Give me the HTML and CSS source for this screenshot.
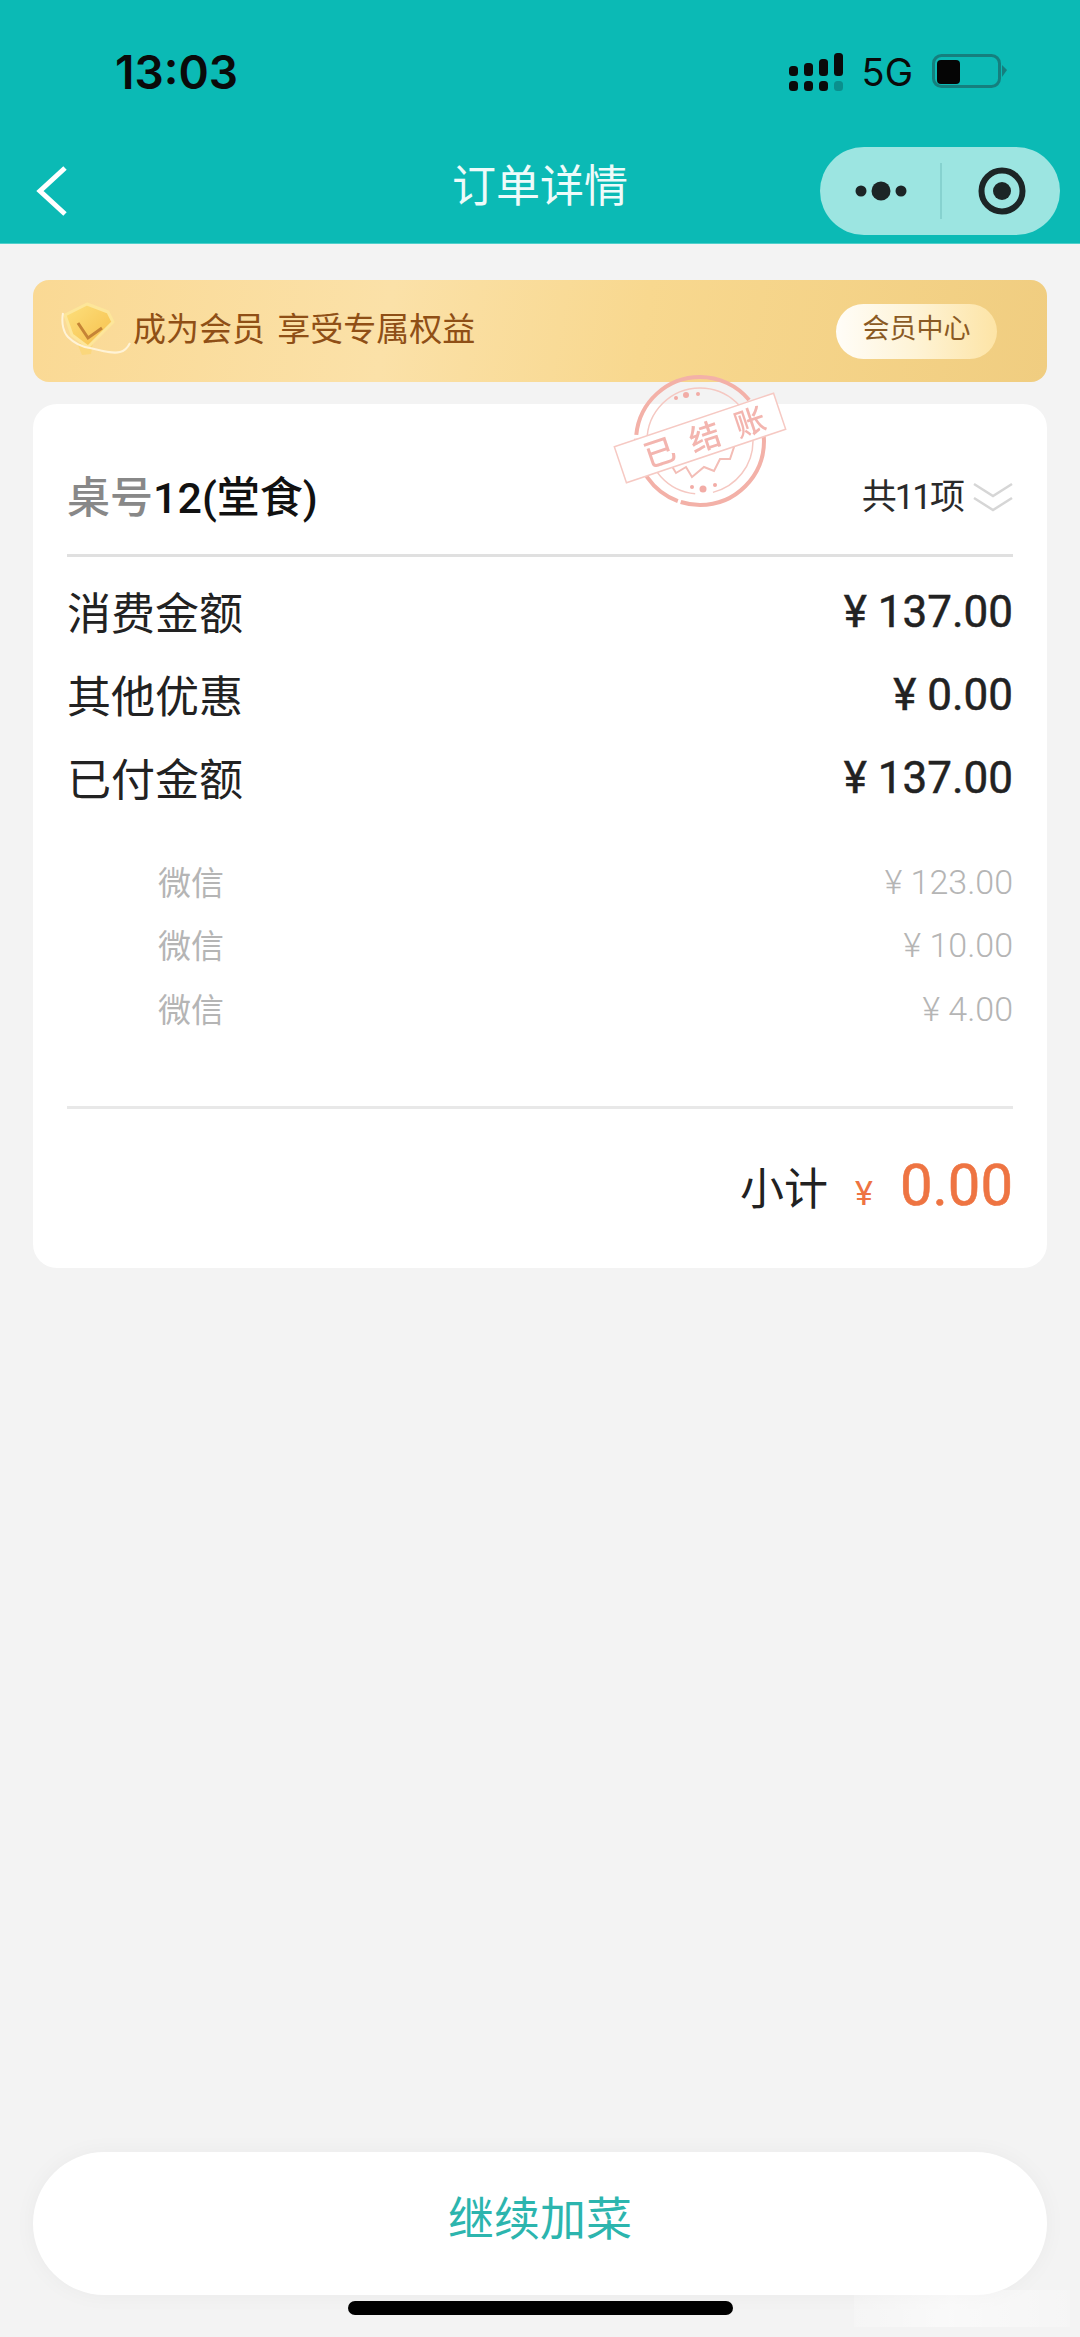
FILE: index.html
```html
<!DOCTYPE html>
<html>
<head>
    <meta charset="utf-8">
    <title>订单详情</title>
    <link rel="stylesheet" href="styles.css">
</head>
<body>
    <div class="page">
        <div class="header">
            <div class="status-bar">
                <span class="time">13:03</span>
                <div class="status-icons">
                    <svg class="signal" width="54" height="38" viewBox="0 0 54 38">
                        <rect x="0" y="13" width="9" height="10" rx="3.5" fill="#0a0a0a"/>
                        <rect x="15" y="10" width="9" height="13" rx="3.5" fill="#0a0a0a"/>
                        <rect x="30" y="6" width="9" height="17" rx="3.5" fill="#0a0a0a"/>
                        <rect x="45" y="0" width="9" height="23" rx="3.5" fill="#0a0a0a"/>
                        <rect x="0" y="28" width="9" height="10" rx="3.5" fill="#0a0a0a"/>
                        <rect x="15" y="28" width="9" height="10" rx="3.5" fill="#0a0a0a"/>
                        <rect x="30" y="28" width="9" height="10" rx="3.5" fill="#0a0a0a"/>
                        <rect x="45" y="28" width="9" height="10" rx="3.5" fill="#0a8f8d"/>
                    </svg>
                    <span class="network">5G</span>
                    <svg class="battery" width="75" height="34" viewBox="0 0 75 34">
                        <rect x="1.5" y="1.5" width="66" height="31" rx="8" fill="none" stroke="#157f7e" stroke-width="3"/>
                        <rect x="5" y="6" width="23" height="24" rx="4" fill="#050505"/>
                        <path d="M70 11 L75 16 L70 23 Z" fill="#157f7e"/>
                    </svg>
                </div>
            </div>
            <div class="nav-bar">
                <svg class="back" width="32" height="50" viewBox="0 0 32 50">
                    <path d="M29 2 L4 25 L29 48" fill="none" stroke="#fff" stroke-width="5"/>
                </svg>
                <span class="nav-title">订单详情</span>
                <div class="capsule">
                    <svg width="60" height="20" viewBox="0 0 60 20">
                        <circle cx="6" cy="10" r="5.5" fill="#1c2526"/>
                        <circle cx="26" cy="10" r="9.5" fill="#1c2526"/>
                        <circle cx="46" cy="10" r="5.5" fill="#1c2526"/>
                    </svg>
                    <span class="capsule-line"></span>
                    <svg width="48" height="48" viewBox="0 0 48 48">
                        <circle cx="24" cy="24" r="20.5" fill="none" stroke="#1c2526" stroke-width="6"/>
                        <circle cx="24" cy="24" r="9" fill="#1c2526"/>
                    </svg>
                </div>
            </div>
        </div>

        <div class="content">
            <div class="member-banner">
                <div class="member-left">
                    <svg width="76" height="58" viewBox="0 0 76 58">
                        <defs>
                            <linearGradient id="shield" x1="0" y1="0" x2="1" y2="1">
                                <stop offset="0" stop-color="#fde07e"/>
                                <stop offset="1" stop-color="#f6bf4a"/>
                            </linearGradient>
                        </defs>
                        <path d="M16 41 L32 41 L30 52 L21 53 Z" fill="#fbd77c"/>
                        <path d="M4 13 L26 2 L47 10 L52 20 L27 45 L11 33 Z" fill="url(#shield)" stroke="#fde69a" stroke-width="3" stroke-linejoin="round"/>
                        <path d="M17 21 L27 36 L41 26" fill="none" stroke="#c58436" stroke-width="3"/>
                        <path d="M2 11 C0 22 3 31 7 35 C14 42 22 45 29 46 C42 49 52 52 59 50 C64 49 67 45 69 41" fill="none" stroke="#fff3d6" stroke-width="2"/>
                    </svg>
                    <span class="member-text">成为会员 享受专属权益</span>
                </div>
                <span class="member-btn">会员中心</span>
            </div>

            <div class="card">
                <div class="card-head">
                    <div class="table-name"><span class="table-label">桌号</span>12(堂食)</div>
                    <div class="item-count">
                        <span class="item-text">共11项</span>
                        <svg width="40" height="30" viewBox="0 0 40 30">
                            <path d="M1 2 L20 14 L39 2 M1 16 L20 28 L39 16" fill="none" stroke="#d6d6d6" stroke-width="2.5"/>
                        </svg>
                    </div>
                </div>

                <div class="rows">
                    <div class="row"><span>消费金额</span><span class="amount">¥ 137.00</span></div>
                    <div class="row"><span>其他优惠</span><span class="amount">¥ 0.00</span></div>
                    <div class="row"><span>已付金额</span><span class="amount">¥ 137.00</span></div>
                </div>

                <div class="pay-rows">
                    <div class="pay-row"><span>微信</span><span class="pay-amount">¥ 123.00</span></div>
                    <div class="pay-row"><span>微信</span><span class="pay-amount">¥ 10.00</span></div>
                    <div class="pay-row"><span>微信</span><span class="pay-amount">¥ 4.00</span></div>
                </div>

                <div class="subtotal">
                    <span class="subtotal-label">小计</span>
                    <span class="subtotal-yen">¥</span>
                    <span class="subtotal-value">0.00</span>
                </div>
            </div>

            <!-- stamp sits over the banner and the card -->
            <svg class="stamp" width="190" height="150" viewBox="0 0 190 150">
                <circle cx="92" cy="74" r="64" fill="none" stroke="#f3b1a8" stroke-width="4" stroke-dasharray="120 3 80 4 150 2"/>
                <circle cx="92" cy="74" r="53" fill="none" stroke="#f5c8c2" stroke-width="1.5" stroke-dasharray="70 18 240 10"/>
                <g fill="#f2aca6">
                    <circle cx="68" cy="31" r="2"/><circle cx="78" cy="28" r="3"/><circle cx="90" cy="27" r="2"/>
                    <circle cx="84" cy="120" r="2"/><circle cx="95" cy="122" r="3.5"/><circle cx="107" cy="118" r="2"/>
                </g>
                <path d="M62 96 L128 74 L122 92 L112 92 L106 104 L96 100 L84 110 L78 100 L68 106 Z" fill="none" stroke="#f3bdb6" stroke-width="2"/>
                <g transform="rotate(-18.6 92 71)">
                    <rect x="8" y="52" width="168" height="38" fill="#fff" stroke="#f6c9c3" stroke-width="1.5"/>
                    <text class="stamp-text" x="105" y="83" text-anchor="middle">已结账</text>
                </g>
            </svg>
        </div>

        <div class="footer">
            <div class="add-btn">继续加菜</div>
            <div class="home-bar"></div>
            <div class="watermark"></div>
        </div>
    </div>
</body>
</html>
```

FILE: styles.css
```css
* { box-sizing: border-box; }
body {
    margin: 0;
    font-family: "Roboto", "Noto Sans CJK SC", sans-serif;
    color: #222;
}
.page {
    width: 1080px;
    height: 2337px;
    background-color: #f3f3f3;
    display: flex;
    flex-direction: column;
    overflow: hidden;
}

/* header */
.header {
    height: 244px;
    background-color: #0bbab5;
    border-bottom: 1px solid #4fd0cb;
    padding: 53px 20px 0 36px;
}
.status-bar {
    height: 38px;
    display: flex;
    justify-content: space-between;
    align-items: center;
    padding: 0 53px 0 79px;
}
.time { font-family: "Inter", sans-serif; font-size: 46px; font-weight: 600; color: #0a0a0a; }
.status-icons { display: flex; align-items: center; }
.network { font-family: "Inter", sans-serif; font-size: 38px; color: #0a0a0a; margin: 0 19px; }
.battery { margin-top: -2px; }
.nav-bar {
    position: relative;
    margin-top: 56px;
    height: 88px;
    display: flex;
    justify-content: space-between;
    align-items: center;
}
.nav-title {
    position: absolute;
    left: 416px;
    top: 12px;
    font-size: 44px;
    line-height: 56px;
    color: #eefbfa;
}
.capsule {
    width: 240px;
    height: 88px;
    border-radius: 44px;
    background-color: #9ce5e1;
    display: flex;
    align-items: center;
    padding-left: 35px;
}
.capsule-line {
    width: 2px;
    height: 56px;
    background-color: #86d2cf;
    margin: 0 36px 0 25px;
}

/* content */
.content {
    position: relative;
    padding: 36px 33px 0;
}
.member-banner {
    height: 102px;
    border-radius: 16px;
    background: linear-gradient(100deg, #fad994 0%, #fbe1a8 35%, #f8d88f 60%, #f0cd80 100%);
    display: flex;
    justify-content: space-between;
    align-items: center;
    padding: 0 50px 0 28px;
}
.member-left { display: flex; align-items: center; }
.member-text { font-size: 33px; color: #8f4f16; margin: -8px 0 0 -4px; word-spacing: 4px; }
.member-btn {
    width: 161px;
    height: 55px;
    line-height: 50px;
    text-align: center;
    border-radius: 28px;
    font-size: 27px;
    color: #8a5a24;
    background: linear-gradient(90deg, #fffdf8 0%, #fef3d5 50%, #fde4a6 100%);
}

.card {
    margin-top: 22px;
    height: 864px;
    background-color: #fff;
    border-radius: 24px;
    padding: 62px 34px 0;
}
.card-head {
    height: 91px;
    padding-bottom: 33px;
    border-bottom: 3px solid #e0e0e0;
    display: flex;
    justify-content: space-between;
    align-items: center;
}
.table-name { font-size: 43px; font-weight: 500; color: #111; }
.table-label { color: #888; }
.item-count { display: flex; align-items: center; font-size: 35px; color: #2a2a2a; gap: 10px; }
.item-text { letter-spacing: -2px; }
.item-count svg { margin-top: 6px; }

.rows { margin-top: 12px; }
.row {
    height: 83px;
    display: flex;
    justify-content: space-between;
    align-items: center;
    font-size: 44px;
    color: #222;
}
.amount { font-size: 44px; margin-top: 3px; -webkit-text-stroke: 0.5px #222; }

.pay-rows {
    margin-top: 31px;
    padding-bottom: 66px;
    border-bottom: 3px solid #e8e8e8;
}
.pay-row {
    height: 63.5px;
    display: flex;
    justify-content: space-between;
    align-items: center;
    padding-left: 91px;
    font-size: 33px;
    color: #b5b5b5;
}
.pay-amount { font-size: 34px; font-weight: 300; margin-top: 2px; }

.subtotal {
    display: flex;
    justify-content: flex-end;
    align-items: baseline;
    margin-top: 42px;
    height: 62px;
}
.subtotal-label { font-size: 44px; color: #222; }
.subtotal-yen { font-size: 34px; color: #ee7442; margin: 0 27px 0 27px; }
.subtotal-value { font-size: 58px; color: #ee7442; -webkit-text-stroke: 0.6px #ee7442; }

.stamp {
    position: absolute;
    left: 608px;
    top: 123px;
    pointer-events: none;
    filter: blur(0.5px);
}
.stamp-text { font-size: 31px; letter-spacing: 16.5px; fill: #f3b5af; font-weight: 500; }

/* footer */
.footer { position: relative; margin-top: auto; padding: 0 33px 22px; }
.add-btn {
    height: 143px;
    line-height: 135px;
    border-radius: 72px;
    background-color: #fff;
    box-shadow: 0 0 22px rgba(0, 0, 0, 0.04);
    text-align: center;
    font-size: 46px;
    color: #2cb5ae;
}
.home-bar {
    width: 385px;
    height: 14px;
    margin: 6px auto 0;
    border-radius: 7px;
    background-color: #000;
}
.watermark {
    position: absolute;
    left: 854px;
    bottom: 10px;
    width: 216px;
    height: 37px;
    background: linear-gradient(90deg, rgba(255,255,255,0.2), rgba(255,255,255,0.55) 45%, rgba(255,255,255,0.2));
}
```
